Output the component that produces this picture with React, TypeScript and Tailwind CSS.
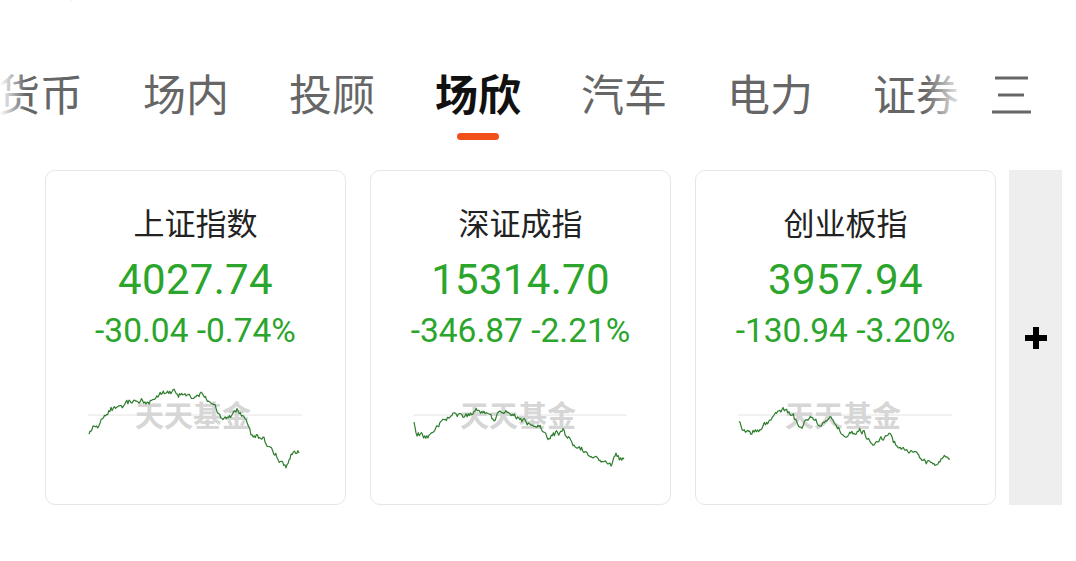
import { useMemo } from "react";

const tabs = ["货币", "场内", "投顾", "场欣", "汽车", "电力", "证券"];

// key points (x, y) inside a 212x90 chart box, traced from the screenshot
const shapes: [number, number][][] = [
  [[0, 47], [4, 40], [10, 38], [22, 22], [30, 18], [40, 15], [58, 13], [70, 10], [84, 5], [96, 8], [109, 7], [125, 17], [134, 35], [149, 25], [156, 30], [162, 47], [175, 52], [189, 72], [197, 80], [202, 65], [210, 66]],
  [[0, 37], [2, 48], [14, 52], [28, 34], [39, 27], [52, 30], [70, 23], [79, 30], [94, 25], [110, 33], [125, 40], [134, 53], [149, 43], [160, 57], [185, 72], [197, 80], [202, 70], [210, 72]],
  [[0, 32], [3, 45], [14, 48], [31, 30], [43, 24], [51, 27], [63, 40], [69, 30], [78, 35], [93, 33], [104, 45], [124, 45], [133, 58], [151, 47], [159, 58], [184, 73], [196, 80], [201, 70], [211, 72]],
];

function rand(seed: number) {
  const x = Math.sin(seed * 12.9898 + 78.233) * 43758.5453;
  return x - Math.floor(x);
}

function buildPath(pts: [number, number][], seed: number) {
  const out: string[] = [];
  let s = seed;
  let drift = 0;
  for (let i = 0; i < pts.length - 1; i++) {
    const [x0, y0] = pts[i];
    const [x1, y1] = pts[i + 1];
    const steps = Math.max(2, Math.round((x1 - x0) / 1.1));
    for (let k = 0; k < steps; k++) {
      const t = k / steps;
      const x = x0 + (x1 - x0) * t;
      drift = drift * 0.7 + (rand(s++) - 0.5) * 4.5;
      const y = y0 + (y1 - y0) * t + drift + (rand(s++) - 0.5) * 2.5;
      out.push(`${out.length ? "L" : "M"}${x.toFixed(1)},${y.toFixed(1)}`);
    }
  }
  const last = pts[pts.length - 1];
  out.push(`L${last[0]},${last[1]}`);
  return out.join(" ");
}

const cards = [
  { name: "上证指数", value: "4027.74", change: "-30.04 -0.74%" },
  { name: "深证成指", value: "15314.70", change: "-346.87 -2.21%" },
  { name: "创业板指", value: "3957.94", change: "-130.94 -3.20%" },
];

function MiniChart({ idx }: { idx: number }) {
  const d = useMemo(() => buildPath(shapes[idx], idx * 1000 + 7), [idx]);
  return (
    <svg width="214" height="90" viewBox="-1 0 214 90" className="block">
      <line x1="-1" y1="28" x2="213" y2="28" stroke="#e4e4e4" strokeWidth="1" />
      <text x="104" y="40" textAnchor="middle" fontSize="29" fontWeight="700" fill="#d6d6d6"
        style={{ fontFamily: '"Noto Sans CJK SC", sans-serif' }}>天天基金</text>
      <path d={d} fill="none" stroke="#2d7d2d" strokeWidth="1.2" strokeLinejoin="round" />
    </svg>
  );
}

export default function App() {
  return (
    <div className="w-[1076px] h-[561px] bg-white overflow-hidden relative" style={{ fontFamily: '"Roboto", "Noto Sans CJK SC", sans-serif' }}>
      {/* cut-off row at very top */}
      <div className="h-[6px] overflow-hidden relative">
        <div className="absolute left-[24px] -top-[44px] text-[43px] leading-none text-[#444] font-bold" style={{ fontFamily: '"Noto Sans CJK SC", sans-serif' }}>
          同类量
        </div>
      </div>

      {/* tabs */}
      <div className="relative h-[146px]">
        <div className="flex gap-[60px] -ml-[3px] pt-[65px]" style={{ fontFamily: '"Noto Sans CJK SC", sans-serif' }}>
          {tabs.map((t) => {
            const active = t === "场欣";
            return (
              <div key={t} className="flex flex-col items-center shrink-0 w-[86px]">
                <span className={`text-[43px] leading-[43px] whitespace-nowrap ${active ? "font-bold text-[#111]" : "text-[#666]"}`}>{t}</span>
                {active && <span className="mt-[19px] w-[42px] h-[7px] rounded-full bg-[#f2501a]" />}
              </div>
            );
          })}
        </div>
        <div className="absolute left-0 top-0 w-[26px] h-full bg-gradient-to-r from-white to-transparent" />
        <div className="absolute left-[925px] top-0 w-[40px] h-full bg-gradient-to-r from-transparent to-white" />
        <div className="absolute left-[965px] top-0 w-[111px] h-full bg-white flex items-start">
          <svg width="44" height="40" viewBox="0 0 44 40" className="ml-[24px] mt-[70px]">
            <line x1="6" y1="2" x2="39" y2="2" stroke="#666" strokeWidth="3" />
            <line x1="9" y1="19" x2="35" y2="19" stroke="#666" strokeWidth="3" />
            <line x1="3" y1="36" x2="42" y2="36" stroke="#666" strokeWidth="3" />
          </svg>
        </div>
      </div>

      {/* index cards */}
      <div className="flex pl-[45px] mt-[18px] items-stretch">
        <div className="flex gap-[24px]">
          {cards.map((c, i) => (
            <div key={c.name} className="w-[301px] h-[335px] rounded-[10px] border border-[#e6e6e6] flex flex-col items-center">
              <div className="mt-[31px] h-[40px] leading-[40px] text-[31px] text-[#222]" style={{ fontFamily: '"Noto Sans CJK SC", sans-serif' }}>{c.name}</div>
              <div className="mt-[10px] h-[56px] leading-[56px] text-[42px] text-[#2ba52b] tracking-[0.3px]">{c.value}</div>
              <div className="mt-[1px] h-[44px] leading-[44px] text-[33.5px] text-[#2ba52b]">{c.change}</div>
              <div className="mt-[34px] w-[214px] -translate-x-[1px]">
                <MiniChart idx={i} />
              </div>
            </div>
          ))}
        </div>
        <div className="ml-[13px] w-[53px] h-[335px] bg-[#eeeeee] flex items-center justify-center">
          <svg width="26" height="26" viewBox="0 0 26 26">
            <rect x="10" y="2" width="6" height="22" fill="#000" />
            <rect x="2" y="10" width="22" height="6" fill="#000" />
          </svg>
        </div>
      </div>
    </div>
  );
}
